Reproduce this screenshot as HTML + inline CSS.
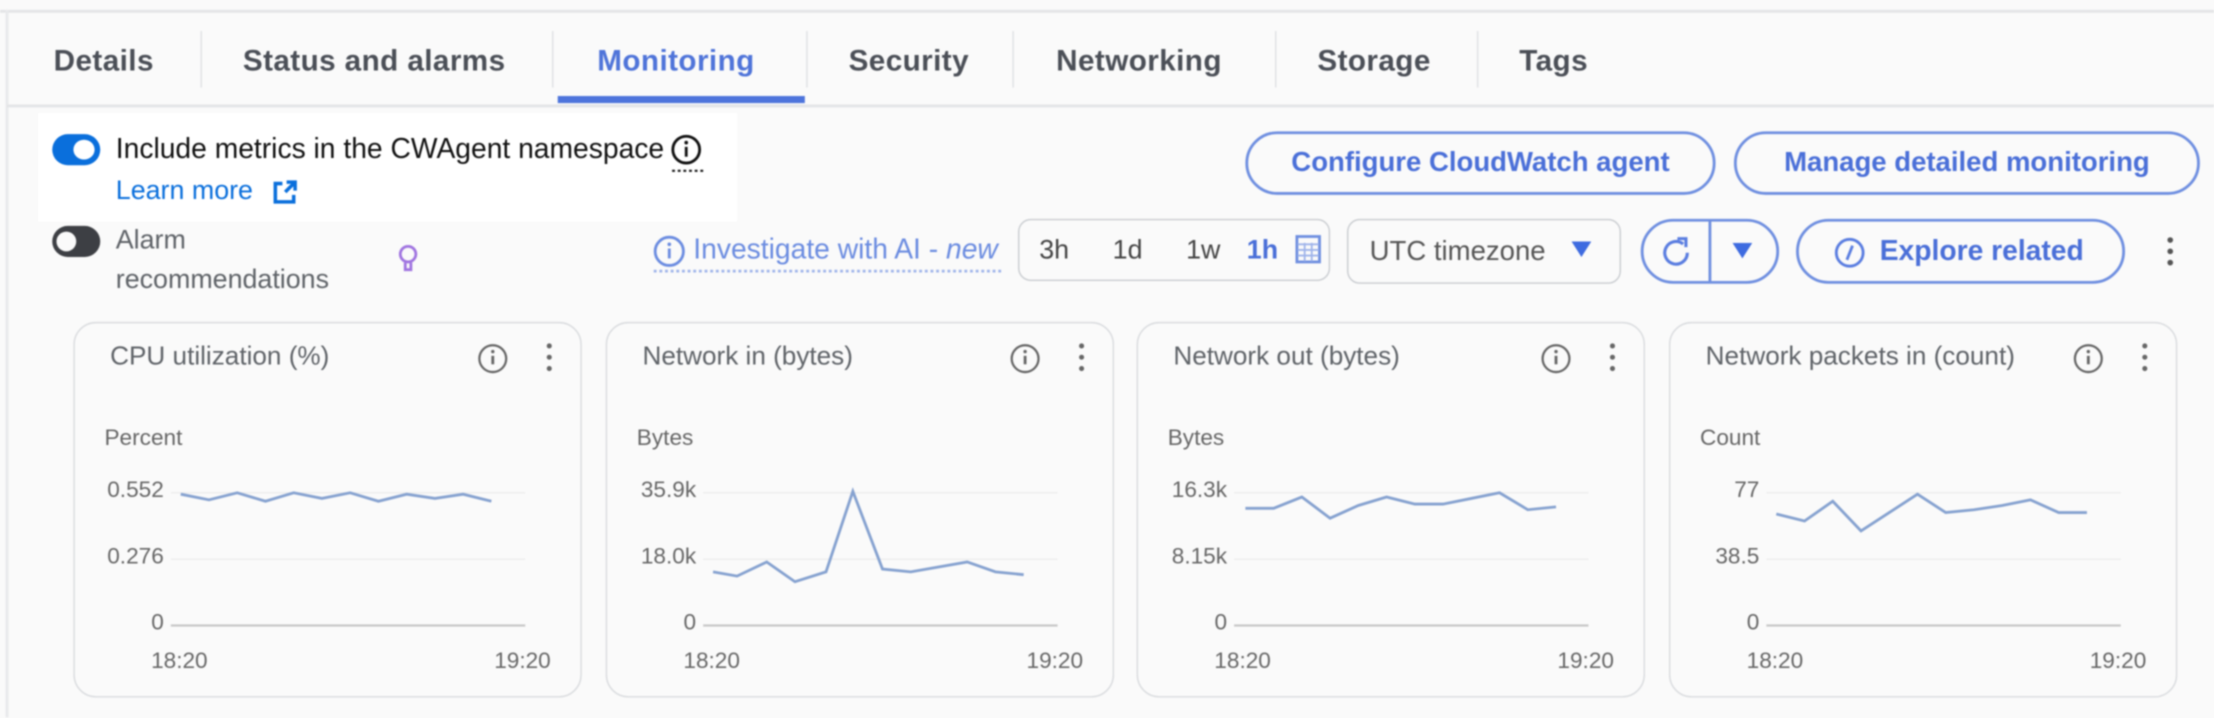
<!DOCTYPE html>
<html><head><meta charset="utf-8"><style>
html,body{margin:0;padding:0;width:2214px;height:718px;overflow:hidden;background:#fafafa}
#w{position:absolute;left:0;top:0;width:1568px;height:508px;transform:scale(1.41199);transform-origin:0 0;font-family:"Liberation Sans",sans-serif;filter:blur(0.5px)}
.a{position:absolute;white-space:nowrap}
.tab{position:absolute;top:32px;font-size:21px;font-weight:bold;color:#4b4f57;letter-spacing:0.3px}
.div{position:absolute;top:22px;width:1px;height:40px;background:#dfe1e4}
.btn{position:absolute;border:2px solid #6f8fe0;border-radius:24px;color:#4a6fd8;font-weight:bold;font-size:19.5px;box-sizing:border-box;text-align:center}
.card{position:absolute;top:228px;width:360px;height:266px;border:1.5px solid #d9dbde;border-radius:16px;box-sizing:border-box;background:#fafafa}
.t{position:absolute;font-size:18.5px;color:#5f6368}
.s{position:absolute;font-size:16px;color:#666}
</style></head><body><div id="w">
<div class="a" style="left:0;top:7px;width:1568px;height:2px;background:#e3e4e6"></div>
<div class="a" style="left:4px;top:7px;width:2px;height:501px;background:#e8e9eb"></div>
<div class="a" style="left:5px;top:74px;width:1563px;height:2px;background:#e3e4e6"></div>

<div class="tab" style="left:38px">Details</div>
<div class="div" style="left:142px"></div>
<div class="tab" style="left:172px">Status and alarms</div>
<div class="div" style="left:391px"></div>
<div class="tab" style="left:423px;color:#4f74d9">Monitoring</div>
<div class="a" style="left:395px;top:68px;width:175px;height:5px;background:#4d74dc"></div>
<div class="div" style="left:571px"></div>
<div class="tab" style="left:601px">Security</div>
<div class="div" style="left:717px"></div>
<div class="tab" style="left:748px">Networking</div>
<div class="div" style="left:903px"></div>
<div class="tab" style="left:933px">Storage</div>
<div class="div" style="left:1046px"></div>
<div class="tab" style="left:1076px">Tags</div>

<div class="a" style="left:27px;top:80px;width:495px;height:77px;background:#fff"></div>
<div class="a" style="left:37px;top:95px;width:34px;height:22px;border-radius:11px;background:#0a6fdc"></div>
<div class="a" style="left:52px;top:99px;width:15px;height:14px;border-radius:50%;background:#fff"></div>
<div class="a" style="left:82px;top:95px;font-size:20px;color:#111">Include metrics in the CWAgent namespace</div>
<svg class="a" style="left:474px;top:94px" width="26" height="30"><circle cx="12" cy="12" r="9.5" fill="none" stroke="#111" stroke-width="2"/><rect x="11" y="10" width="2" height="7" fill="#111"/><circle cx="12" cy="7" r="1.3" fill="#111"/><line x1="2" y1="27" x2="24" y2="27" stroke="#111" stroke-width="1.5" stroke-dasharray="2 2"/></svg>
<div class="a" style="left:82px;top:125px;font-size:19px;color:#0a6fdc">Learn more</div>
<svg class="a" style="left:192px;top:126px" width="20" height="20"><path d="M8 4H3v13h13v-5" fill="none" stroke="#0a6fdc" stroke-width="2.5"/><path d="M10 10L17 3M11 3h6v6" fill="none" stroke="#0a6fdc" stroke-width="2.5"/></svg>

<div class="a" style="left:37px;top:160px;width:34px;height:22px;border-radius:11px;background:#3d3f44"></div>
<div class="a" style="left:40px;top:164px;width:14px;height:14px;border-radius:50%;background:#fafafa"></div>
<div class="a" style="left:82px;top:160px;font-size:19px;color:#5f6368">Alarm</div>
<div class="a" style="left:82px;top:188px;font-size:19px;color:#5f6368">recommendations</div>
<svg class="a" style="left:280px;top:172px" width="18" height="24"><circle cx="9" cy="8" r="5.5" fill="none" stroke="#a074e0" stroke-width="2"/><path d="M7 14v5h4v-5" fill="none" stroke="#a074e0" stroke-width="2"/></svg>

<svg class="a" style="left:462px;top:166px" width="24" height="24"><circle cx="12" cy="12" r="10" fill="none" stroke="#6b8ce0" stroke-width="2"/><rect x="11" y="10" width="2" height="7" fill="#6b8ce0"/><circle cx="12" cy="7" r="1.3" fill="#6b8ce0"/></svg>
<div class="a" style="left:491px;top:166px;font-size:20px;color:#6b8ce0">Investigate with AI - <i>new</i></div>
<div class="a" style="left:463px;top:191px;width:246px;border-top:2px dotted #9fb4ea"></div>

<div class="a" style="left:721px;top:155px;width:221px;height:44px;border:1.5px solid #c9ccd0;border-radius:9px;box-sizing:border-box;background:#fafafa"></div>
<div class="a" style="left:736px;top:167px;font-size:19px;color:#444">3h</div>
<div class="a" style="left:788px;top:167px;font-size:19px;color:#444">1d</div>
<div class="a" style="left:840px;top:167px;font-size:19px;color:#444">1w</div>
<div class="a" style="left:883px;top:167px;font-size:19px;color:#4a6fd8;font-weight:bold">1h</div>
<svg class="a" style="left:917px;top:166px" width="19" height="21"><rect x="1.5" y="1.5" width="16" height="18" fill="none" stroke="#6f8fe0" stroke-width="2"/><path d="M2 7h15M2 11h15M2 15h15M7 6v13M12 6v13" stroke="#9fb4ea" stroke-width="1.3"/></svg>

<div class="a" style="left:954px;top:155px;width:194px;height:46px;border:1.5px solid #c9ccd0;border-radius:9px;box-sizing:border-box"></div>
<div class="a" style="left:970px;top:167px;font-size:19.5px;color:#555">UTC timezone</div>
<svg class="a" style="left:1113px;top:171px" width="14" height="12"><path d="M0 0h14L7 11z" fill="#3e6be0"/></svg>

<div class="btn" style="left:1162px;top:155px;width:98px;height:46px"></div>
<div class="a" style="left:1210px;top:156px;width:2px;height:44px;background:#6f8fe0"></div>
<svg class="a" style="left:1175px;top:166px" width="26" height="26"><path d="M20 13a8 8 0 1 1-3-6.2" fill="none" stroke="#5a7de0" stroke-width="2.2"/><path d="M13 3h6v6" fill="none" stroke="#5a7de0" stroke-width="2.2"/></svg>
<svg class="a" style="left:1227px;top:172px" width="14" height="12"><path d="M0 0h14L7 11z" fill="#3e6be0"/></svg>

<div class="btn" style="left:1272px;top:155px;width:233px;height:46px;line-height:42px;padding-left:30px;font-size:20px">Explore related</div>
<svg class="a" style="left:1298px;top:167px" width="24" height="24"><circle cx="12" cy="12" r="9.5" fill="none" stroke="#5a7de0" stroke-width="2"/><path d="M14 7l-4 10" stroke="#5a7de0" stroke-width="2"/></svg>
<svg class="a" style="left:1533px;top:166px" width="8" height="26"><circle cx="4" cy="4" r="2" fill="#555"/><circle cx="4" cy="12" r="2" fill="#555"/><circle cx="4" cy="20" r="2" fill="#555"/></svg>

<div class="btn" style="left:882px;top:93px;width:333px;height:45px;line-height:41px">Configure CloudWatch agent</div>
<div class="btn" style="left:1228px;top:93px;width:330px;height:45px;line-height:41px">Manage detailed monitoring</div>

<div class="card" style="left:52px"></div>
<div class="card" style="left:429px"></div>
<div class="card" style="left:805px"></div>
<div class="card" style="left:1182px"></div>

<svg class="a" style="left:0;top:0" width="1568" height="508">
<g id="c1">
<g fill="none" stroke="#666" stroke-width="1.6"><circle cx="349" cy="254" r="9.5"/></g>
<rect x="348" y="252" width="2" height="6" fill="#666"/><circle cx="349" cy="249" r="1.2" fill="#666"/>
<circle cx="389" cy="245" r="1.8" fill="#666"/><circle cx="389" cy="253" r="1.8" fill="#666"/><circle cx="389" cy="261" r="1.8" fill="#666"/>
<line x1="121" y1="349" x2="372" y2="349" stroke="#ececec"/>
<line x1="121" y1="396" x2="372" y2="396" stroke="#ececec"/>
<line x1="121" y1="443" x2="372" y2="443" stroke="#c8c8c8" stroke-width="1.6"/>
</g>
<use href="#c1" x="377"/><use href="#c1" x="753"/><use href="#c1" x="1130"/>
<g fill="none" stroke="#86a2d0" stroke-width="2">
<polyline points="128,350 148,354 168,349 188,355 208,349 228,353 248,349 268,355 288,350 308,353 328,350 348,355"/>
<polyline points="505,405 522,408 543,398 563,412 585,405 604,348 625,403 645,405 685,398 705,405 725,407"/>
<polyline points="882,360 902,360 922,352 942,367 962,358 982,352 1002,357 1022,357 1042,353 1062,349 1082,361 1102,359"/>
<polyline points="1258,364 1278,369 1298,355 1318,376 1338,363 1358,350 1378,363 1398,361 1418,358 1438,354 1458,363 1478,363"/>
</g>
</svg>

<div class="t" style="left:78px;top:241px">CPU utilization (%)</div>
<div class="t" style="left:455px;top:241px">Network in (bytes)</div>
<div class="t" style="left:831px;top:241px">Network out (bytes)</div>
<div class="t" style="left:1208px;top:241px">Network packets in (count)</div>

<div class="s" style="left:74px;top:302px">Percent</div>
<div class="s" style="left:451px;top:302px">Bytes</div>
<div class="s" style="left:827px;top:302px">Bytes</div>
<div class="s" style="left:1204px;top:302px">Count</div>

<div class="s" style="left:56px;width:60px;text-align:right;top:339px">0.552</div>
<div class="s" style="left:56px;width:60px;text-align:right;top:386px">0.276</div>
<div class="s" style="left:56px;width:60px;text-align:right;top:433px">0</div>
<div class="s" style="left:433px;width:60px;text-align:right;top:339px">35.9k</div>
<div class="s" style="left:433px;width:60px;text-align:right;top:386px">18.0k</div>
<div class="s" style="left:433px;width:60px;text-align:right;top:433px">0</div>
<div class="s" style="left:809px;width:60px;text-align:right;top:339px">16.3k</div>
<div class="s" style="left:809px;width:60px;text-align:right;top:386px">8.15k</div>
<div class="s" style="left:809px;width:60px;text-align:right;top:433px">0</div>
<div class="s" style="left:1186px;width:60px;text-align:right;top:339px">77</div>
<div class="s" style="left:1186px;width:60px;text-align:right;top:386px">38.5</div>
<div class="s" style="left:1186px;width:60px;text-align:right;top:433px">0</div>

<div class="s" style="left:107px;top:460px">18:20</div><div class="s" style="left:350px;top:460px">19:20</div>
<div class="s" style="left:484px;top:460px">18:20</div><div class="s" style="left:727px;top:460px">19:20</div>
<div class="s" style="left:860px;top:460px">18:20</div><div class="s" style="left:1103px;top:460px">19:20</div>
<div class="s" style="left:1237px;top:460px">18:20</div><div class="s" style="left:1480px;top:460px">19:20</div>
</div></body></html>
